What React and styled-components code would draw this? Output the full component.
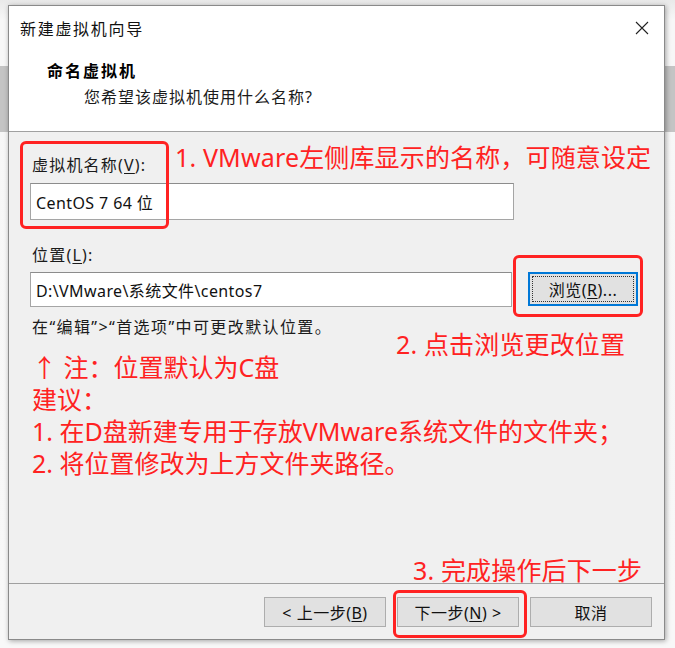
import React from 'react';
import styled, { createGlobalStyle } from 'styled-components';

const FONT = `"Noto Sans", "Noto Sans CJK SC", sans-serif`;
const RED = '#ff2222';

//#region styled-elements
const GlobalStyle = createGlobalStyle`
    *, *::before, *::after {
        box-sizing: border-box;
    }
    html, body {
        margin: 0;
        padding: 0;
    }
    body {
        width: 675px;
        height: 648px;
        overflow: hidden;
        font-family: ${FONT};
        background:
            linear-gradient(to bottom, transparent 66px, #c4c4c4 66px, #c4c4c4 132px, transparent 132px),
            linear-gradient(to bottom, #e9e9e9, #f7f7f7 20px, #f8f8f8);
    }
`;

const Window = styled.div`
    position: relative;
    margin: 5px 0 0 8px;
    width: 657px;
    height: 635px;
    border: 1px solid #8a8a8a;
    box-shadow: 1px 1px 5px rgba(0, 0, 0, 0.35);
    background: #f0f0f0;
    display: flex;
    flex-direction: column;
    color: #1b1b1b;
`;

const TitleBar = styled.div`
    height: 44px;
    background: #fff;
    display: flex;
    align-items: center;
    justify-content: space-between;
    padding: 0 12px 0 11px;
`;

const Title = styled.span`
    font-size: 16px;
    letter-spacing: 1.7px;
    color: #111;
`;

const CloseButton = styled.button`
    width: 20px;
    height: 20px;
    padding: 0;
    border: none;
    background: none;
    display: flex;
    align-items: center;
    justify-content: center;
`;

const Header = styled.div`
    background: #fff;
    border-bottom: 1px solid #a0a0a0;
    padding: 11px 0 24px 38px;
    display: flex;
    flex-direction: column;
    gap: 6px;
`;

const HeaderTitle = styled.div`
    font-size: 16px;
    line-height: 20px;
    font-weight: 700;
    letter-spacing: 2px;
    color: #000;
`;

const HeaderSub = styled.div`
    font-size: 16px;
    line-height: 20px;
    letter-spacing: 1px;
    padding-left: 37px;
`;

const Body = styled.div`
    flex: 1;
    padding: 23px 0 0 21px;
    display: flex;
    flex-direction: column;
`;

const Label = styled.div`
    font-size: 16px;
    line-height: 20px;
    letter-spacing: 1.2px;
    padding-left: 2px;
    margin-top: ${p => p.$gap || 0}px;
`;

const Field = styled.div`
    width: ${p => p.$width}px;
    height: ${p => p.$height}px;
    background: #fff;
    border: 1px solid #a5a5a5;
    border-top-color: #8c8c8c;
    font-size: 16px;
    letter-spacing: 0.4px;
    display: flex;
    align-items: center;
    padding-left: 5px;
    color: #111;
`;

const FieldRow = styled.div`
    display: flex;
    align-items: flex-start;
    gap: 16px;
    margin-top: ${p => p.$gap}px;
`;

const BrowseButton = styled.button`
    position: relative;
    width: 110px;
    height: 34px;
    background: #e1e1e1;
    border: 2px solid #0078d7;
    font-family: ${FONT};
    font-size: 16px;
    letter-spacing: 0.5px;
    color: #111;
    padding: 0;

    &::after {
        content: '';
        position: absolute;
        inset: 2px;
        border: 1px dotted #333;
    }
`;

const Hint = styled.div`
    font-size: 16px;
    line-height: 20px;
    padding-left: 2px;
    margin-top: 10px;
    letter-spacing: 1.4px;
`;

const Notes = styled.div`
    margin-top: 14px;
    padding-left: 2px;
    color: ${RED};
    font-size: 25px;
    line-height: 32px;
`;

const Footer = styled.div`
    height: 56px;
    border-top: 1px solid #a0a0a0;
    display: flex;
    justify-content: flex-end;
    align-items: flex-start;
    gap: 11px;
    padding: 13px 12px 0 0;
`;

const DialogButton = styled.button`
    width: 122px;
    height: 30px;
    background: #e1e1e1;
    border: 1px solid #adadad;
    font-family: ${FONT};
    font-size: 16px;
    letter-spacing: 0.5px;
    color: #111;
    padding: 0;
`;

const Key = styled.u`
    text-underline-offset: 2px;
`;

const Mark = styled.div`
    position: absolute;
    left: ${p => p.$x}px;
    top: ${p => p.$y}px;
    width: ${p => p.$w}px;
    height: ${p => p.$h}px;
    border: 3px solid ${RED};
    border-radius: 6px;
    pointer-events: none;
`;

const Callout = styled.div`
    position: absolute;
    left: ${p => p.$x}px;
    top: ${p => p.$y}px;
    color: ${RED};
    font-size: 25px;
    letter-spacing: 0.15px;
    line-height: 30px;
    white-space: nowrap;
`;
//#endregion

const CloseIcon = () => (
    <svg width="14" height="14" viewBox="0 0 14 14">
        <path d="M1 1 L13 13 M13 1 L1 13" stroke="#222" strokeWidth="1.1" fill="none" />
    </svg>
);

const notes = [
    '↑ 注：位置默认为C盘',
    '建议：',
    '1. 在D盘新建专用于存放VMware系统文件的文件夹；',
    '2. 将位置修改为上方文件夹路径。',
];

export default function App() {
    return (
        <>
            <GlobalStyle />
            <Window>
                <TitleBar>
                    <Title>新建虚拟机向导</Title>
                    <CloseButton><CloseIcon /></CloseButton>
                </TitleBar>
                <Header>
                    <HeaderTitle>命名虚拟机</HeaderTitle>
                    <HeaderSub>您希望该虚拟机使用什么名称?</HeaderSub>
                </Header>
                <Body>
                    <Label>虚拟机名称(<Key>V</Key>):</Label>
                    <FieldRow $gap={8}>
                        <Field $width={484} $height={37}>CentOS 7 64 位</Field>
                    </FieldRow>
                    <Label $gap={25}>位置(<Key>L</Key>):</Label>
                    <FieldRow $gap={7}>
                        <Field $width={482} $height={35}>D:\VMware\系统文件\centos7</Field>
                        <BrowseButton>浏览(<Key>R</Key>)...</BrowseButton>
                    </FieldRow>
                    <Hint>在“编辑”&gt;“首选项”中可更改默认位置。</Hint>
                    <Notes>
                        {notes.map(line => <div key={line}>{line}</div>)}
                    </Notes>
                </Body>
                <Footer>
                    <DialogButton>&lt; 上一步(<Key>B</Key>)</DialogButton>
                    <DialogButton>下一步(<Key>N</Key>) &gt;</DialogButton>
                    <DialogButton>取消</DialogButton>
                </Footer>

                <Mark $x={11} $y={135} $w={149} $h={88} />
                <Callout $x={166} $y={136}>1. VMware左侧库显示的名称，可随意设定</Callout>
                <Mark $x={504} $y={249} $w={130} $h={62} />
                <Callout $x={387} $y={323}>2. 点击浏览更改位置</Callout>
                <Callout $x={404} $y={549}>3. 完成操作后下一步</Callout>
                <Mark $x={384} $y={584} $w={134} $h={48} />
            </Window>
        </>
    );
}
